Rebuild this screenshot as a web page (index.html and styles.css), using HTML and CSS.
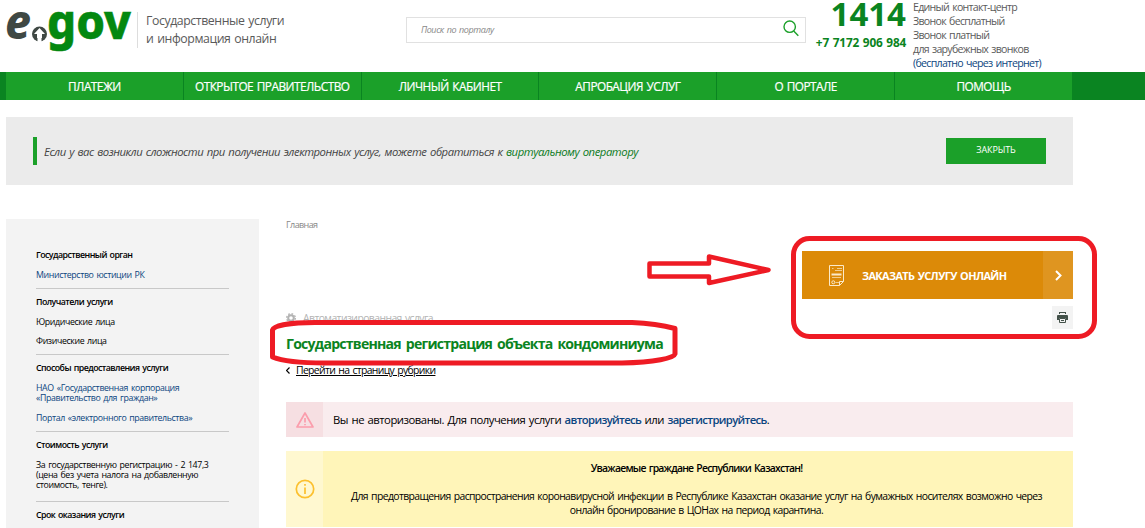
FILE: index.html
```html
<!DOCTYPE html>
<html lang="ru">
<head>
    <meta charset="UTF-8">
    <title>Государственная регистрация объекта кондоминиума</title>
    <link rel="stylesheet" href="styles.css">
</head>
<body>
<header class="header">
    <a class="logo">
        <svg width="126" height="52" viewBox="0 0 126 52">
            <text class="logo-e" x="-1" y="39" textLength="26" lengthAdjust="spacingAndGlyphs">e</text>
            <circle cx="33.5" cy="34" r="7.5" fill="#3f4844"/>
            <path d="M33.5 28l5.500 6h-3v4h-5v-4h-3z" fill="#fff"/>
            <path d="M33.5 37v6" stroke="#fff" stroke-width="4"/>
            <text class="logo-gov" x="41" y="39" textLength="84" lengthAdjust="spacingAndGlyphs">gov</text>
        </svg>
    </a>
    <div class="slogan">Государственные услуги<br>и информация онлайн</div>
    <div class="search">
        <span>Поиск по порталу</span>
        <svg width="16" height="17" viewBox="0 0 16 17" fill="none" stroke="#1ba029" stroke-width="1.4">
            <circle cx="6.7" cy="6.7" r="5.7"/>
            <path d="M10.7 11l4.6 4.8"/>
        </svg>
    </div>
    <div class="phones">
        <div class="short">1414</div>
        <div class="long">+7 7172 906 984</div>
    </div>
    <div class="contacts">
        <div>Единый контакт-центр</div>
        <div>Звонок бесплатный</div>
        <div>Звонок платный</div>
        <div>для зарубежных звонков</div>
        <div><a class="link">(бесплатно через интернет)</a></div>
    </div>
</header>
<nav class="menu">
    <a>ПЛАТЕЖИ</a>
    <a>ОТКРЫТОЕ ПРАВИТЕЛЬСТВО</a>
    <a>ЛИЧНЫЙ КАБИНЕТ</a>
    <a>АПРОБАЦИЯ УСЛУГ</a>
    <a>О ПОРТАЛЕ</a>
    <a>ПОМОЩЬ</a>
</nav>
<div class="notice">
    <p>Если у вас возникли сложности при получении электронных услуг, можете обратиться к <a>виртуальному оператору</a></p>
    <button type="button">ЗАКРЫТЬ</button>
</div>
<div class="content">
    <aside class="sidebar">
        <section>
            <h4>Государственный орган</h4>
            <p><a class="link">Министерство юстиции РК</a></p>
        </section>
        <section>
            <h4>Получатели услуги</h4>
            <p>Юридические лица</p>
            <p class="tight">Физические лица</p>
        </section>
        <section>
            <h4>Способы предоставления услуги</h4>
            <p><a class="link">НАО «Государственная корпорация<br>«Правительство для граждан»</a></p>
            <p><a class="link">Портал «электронного правительства»</a></p>
        </section>
        <section class="price">
            <h4>Стоимость услуги</h4>
            <p>За государственную регистрацию - 2 147,3<br>(цена без учета налога на добавленную<br>стоимость, тенге).</p>
        </section>
        <section>
            <h4>Срок оказания услуги</h4>
        </section>
    </aside>
    <main class="main">
        <div class="crumbs">Главная</div>
        <div class="order">
            <a class="order-btn">
                <svg width="15" height="21" viewBox="0 0 15 21" fill="none" stroke="#fbe9c8">
                    <path d="M.5.5h14v16l-4 4H.5zM14.5 16.5h-4v4"/>
                    <path d="M3 3.5h1.5M8 3.5h5M6 5.5h7M3 12.5h9M6.5 17.5h4" stroke-opacity=".7"/>
                    <path d="M2.5 9.5h10" stroke-width="2"/>
                    <circle cx="4.3" cy="17.3" r="1.5"/>
                </svg>
                <span>ЗАКАЗАТЬ УСЛУГУ ОНЛАЙН</span>
                <i>
                    <svg width="7" height="11" viewBox="0 0 7 11" fill="none" stroke="#fff" stroke-width="2"><path d="M1 1l4.5 4.5L1 10"/></svg>
                </i>
            </a>
            <a class="print">
                <svg width="11" height="11" viewBox="0 0 11 11">
                    <path d="M2 0h7v2H8V1H3v1H2z" fill="#435149"/>
                    <path d="M0 4a1 1 0 0 1 1-1h9a1 1 0 0 1 1 1v4H9V6H2v2H0z" fill="#435149"/>
                    <path d="M2.5 6.5h6v4h-6zM4 8.5h3" fill="none" stroke="#435149"/>
                </svg>
            </a>
        </div>
        <div class="auto">
            <svg width="10" height="10" viewBox="0 0 10 10" fill="none" stroke="#b3b3b3">
                <circle cx="5" cy="5" r="2.8" stroke-width="2"/>
                <circle cx="5" cy="5" r="4.3" stroke-width="1.4" stroke-dasharray="1.7 1.677"/>
            </svg>
            <span>Автоматизированная услуга</span>
        </div>
        <h1>Государственная регистрация объекта кондоминиума</h1>
        <div class="back">
            <svg width="4" height="7" viewBox="0 0 4 7" fill="none" stroke="#000" stroke-width="1.2"><path d="M3.5.5l-3 3 3 3"/></svg>
            <a>Перейти на страницу рубрики</a>
        </div>
        <div class="alert alert-error">
            <div class="alert-icon">
                <svg width="18" height="16" viewBox="0 0 18 16" fill="none" stroke="#fb9dac" stroke-width="1.7" stroke-linejoin="round">
                    <path d="M9 1l8 14H1z"/>
                    <path d="M9 6v4.5M9 12v1.2"/>
                </svg>
            </div>
            <p>Вы не авторизованы. Для получения услуги <a class="link">авторизуйтесь</a> или <a class="link">зарегистрируйтесь</a>.</p>
        </div>
        <div class="alert alert-info">
            <div class="alert-icon">
                <svg width="20" height="20" viewBox="0 0 20 20" fill="none" stroke="#fcc02e" stroke-width="1.7">
                    <circle cx="10" cy="10" r="8.7"/>
                    <path d="M10 5v1.7M10 8.5V15"/>
                </svg>
            </div>
            <div class="alert-text">
                <b>Уважаемые граждане Республики Казахстан!</b>
                <p>Для предотвращения распространения коронавирусной инфекции в Республике Казахстан оказание услуг на бумажных носителях возможно через<br>онлайн бронирование в ЦОНах на период карантина.</p>
            </div>
        </div>
    </main>
</div>
<svg class="marks" width="1145" height="528" viewBox="0 0 1145 528" fill="none" stroke="#ee1b24" stroke-width="5" stroke-linejoin="round">
    <rect x="793.5" y="238.5" width="301" height="98" rx="16"/>
    <path d="M649.5 263.5H709V256.5L768.5 270L709 283V276.5H649.5z" stroke-width="4.5"/>
    <path d="M272.5 330C274 325.5 290 322.5 315 322.5H632C645 323 662 325 675 328.5V354C674 358 655 362.5 622 363H325C300 363 282 361 272.5 357z"/>
</svg>
</body>
</html>
```
FILE: styles.css
```css
* {
    margin: 0;
    padding: 0;
    box-sizing: border-box;
}
body {
    position: relative;
    width: 1145px;
    height: 528px;
    overflow: hidden;
    background: #fff;
    font-family: "Open Sans", "Noto Sans", sans-serif;
    font-size: 10.4px;
    word-spacing: 1px;
    color: #000;
}
.link {
    color: #0b4580;
}

/* header */
.header {
    display: flex;
    height: 72px;
    padding-left: 6px;
    color: #5a5a5a;
}
.logo {
    width: 131px;
}
.logo text {
    font-family: "Noto Sans", sans-serif;
    font-size: 48px;
    font-weight: 800;
}
.logo-e {
    fill: #3f4844;
    font-style: italic;
}
.logo-gov {
    fill: #048810;
    stroke: #048810;
    stroke-width: .5;
}
.slogan {
    width: 269px;
    height: 36px;
    margin-top: 12px;
    padding-left: 8px;
    border-left: 1px solid #ddd;
    font-size: 12.3px;
    letter-spacing: -.42px;
    line-height: 18px;
}
.search {
    display: flex;
    justify-content: space-between;
    width: 400px;
    height: 26px;
    margin-top: 17px;
    padding: 2px 6px 0 14px;
    border: 1px solid #e1e1e1;
    color: #888;
    font-size: 9px;
    font-style: italic;
    letter-spacing: -.4px;
    line-height: 20px;
}
.phones {
    width: 100px;
    color: #0a8421;
    font-weight: 700;
    text-align: right;
}
.short {
    height: 34px;
    font-size: 33px;
    line-height: 28px;
}
.long {
    font-size: 11.8px;
    letter-spacing: -.2px;
    line-height: 17px;
}
.contacts {
    padding-left: 7px;
    font-size: 10.6px;
    letter-spacing: -.7px;
    line-height: 14px;
}

/* menu */
.menu {
    display: flex;
    height: 28px;
    padding: 0 73px 0 6px;
    background: #0a8421;
}
.menu a {
    flex: 1;
    border-right: 1px solid #0a8421;
    background: #1ba029;
    color: #fff;
    font-size: 11.8px;
    font-weight: 500;
    letter-spacing: -.5px;
    line-height: 29px;
    text-align: center;
    -webkit-text-stroke: .2px #fff;
}
.menu a:last-child {
    margin-right: -1px;
}

.notice {
    display: flex;
    align-items: center;
    justify-content: space-between;
    width: 1067px;
    height: 68px;
    margin: 17px 0 34px 6px;
    padding: 0 27px;
    background: #ebebeb;
}
.notice p {
    height: 28px;
    padding-left: 7px;
    border-left: 4px solid #1ba029;
    color: #444;
    font-size: 11.3px;
    font-style: italic;
    letter-spacing: -.45px;
    line-height: 30px;
}
.notice a {
    color: #0a7a1c;
}
.notice button {
    width: 100px;
    height: 26px;
    padding-bottom: 3px;
    border: 0;
    background: #1ba029;
    color: #fff;
    font-family: inherit;
    font-size: 9px;
    letter-spacing: -.1px;
}

.content {
    display: flex;
    padding-left: 6px;
}

/* sidebar */
.sidebar {
    width: 253px;
    height: 320px;
    padding: 23px 30px 0;
    background: #f3f3f3;
    font-size: 8.8px;
    letter-spacing: -.38px;
    line-height: 10px;
}
.sidebar section {
    padding: 8px 0;
    border-bottom: 1px solid #c8c8c8;
}
.sidebar h4 {
    font-size: 8.8px;
    font-weight: 600;
    letter-spacing: -.54px;
}
.sidebar p {
    margin-top: 10px;
}
.sidebar .tight {
    margin-top: 9px;
}
.sidebar .price {
    padding-bottom: 11px;
}

/* main column */
.main {
    width: 787px;
    margin-left: 27px;
}
.crumbs {
    height: 32px;
    color: #888;
    font-size: 9px;
    letter-spacing: -.6px;
    line-height: 12px;
}
.order {
    display: flex;
    flex-direction: column;
    align-items: flex-end;
    height: 59px;
}
.order-btn {
    display: flex;
    flex-shrink: 0;
    align-items: center;
    width: 271px;
    height: 48px;
    padding-left: 27px;
    background: #dc8a08;
    color: #fff;
    font-size: 10.9px;
    font-weight: 700;
    letter-spacing: -.6px;
}
.order-btn span {
    flex: 1;
    padding-left: 18px;
    white-space: nowrap;
}
.order-btn i {
    display: flex;
    align-items: center;
    justify-content: center;
    width: 30px;
    height: 48px;
    background: #df9520;
}
.print {
    display: flex;
    flex-shrink: 0;
    align-items: center;
    justify-content: center;
    width: 21px;
    height: 23px;
    margin-top: 7px;
    background: #f3f3f3;
}
.auto {
    display: flex;
    align-items: center;
    width: 400px;
    height: 15px;
    margin-bottom: 1px;
    color: #b3b3b3;
    font-size: 10.4px;
    letter-spacing: -.58px;
}
.auto span {
    padding-left: 7px;
    line-height: 12px;
}
.main h1 {
    width: 480px;
    height: 34px;
    color: #0a8421;
    font-size: 14.1px;
    font-weight: 700;
    letter-spacing: -.77px;
    line-height: 36px;
    word-spacing: 2px;
}
.back {
    display: flex;
    align-items: center;
    height: 20px;
    margin-bottom: 22px;
}
.back a {
    padding-left: 6px;
    letter-spacing: -.64px;
    text-decoration: underline;
}
.alert {
    display: flex;
    width: 787px;
}
.alert-icon {
    display: flex;
    flex-shrink: 0;
    align-items: center;
    justify-content: center;
    width: 37px;
}
.alert-error {
    height: 35px;
    margin-bottom: 14px;
    background: #f9ecee;
    font-size: 11.3px;
    letter-spacing: -.48px;
    line-height: 36px;
}
.alert-error .alert-icon {
    background: #f6dfe2;
}
.alert-error p {
    padding-left: 10px;
}
.alert-error .link {
    font-weight: 600;
    letter-spacing: -.65px;
}
.alert-info {
    height: 76px;
    background: #fff5b9;
    letter-spacing: -.6px;
    line-height: 14px;
}
.alert-info .alert-icon {
    background: #fff8d0;
}
.alert-text {
    flex: 1;
    padding: 10px 3px 0 0;
    text-align: center;
}
.alert-text b {
    font-weight: 600;
    letter-spacing: -.76px;
}
.alert-text p {
    margin-top: 14px;
    white-space: nowrap;
}
.marks {
    position: absolute;
    top: 0;
    left: 0;
}
```
